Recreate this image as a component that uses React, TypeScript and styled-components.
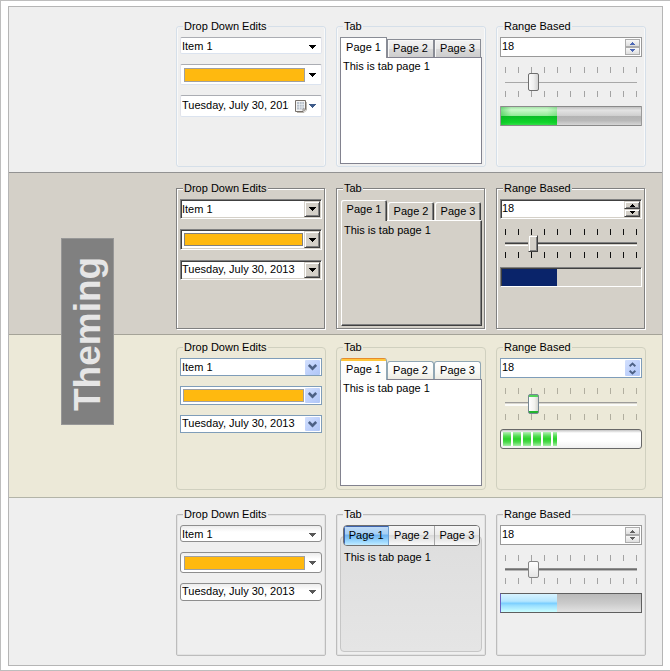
import React, { useId, useState } from 'react';
import styled, { createGlobalStyle, css, ThemeProvider } from 'styled-components';

type Kind = 'aero' | 'classic' | 'luna' | 'silver';

interface Skin {
  kind: Kind;
  face: string;
  divider: string;
  bandPadding: string;
  groupHeight: number;
  group: any;
  comboHeight: number;
  colorHeight: number;
  dateHeight: number;
  field: any;
  numericField: any;
  fieldPad: string;
  spin: any;
  swatch: any;
  strip: any;
  tab: any;
  activeTab: any;
  pane: any;
  tick: string;
  track: any;
  thumbHeight: number;
  thumb: any;
  bar: any;
  trough: any;
  fill: any;
}

const raised = css`
  background: #d4d0c8;
  border: 1px solid;
  border-color: #d4d0c8 #404040 #404040 #d4d0c8;
  box-shadow: inset 1px 1px 0 #fff, inset -1px -1px 0 #808080;
`;

const sunken = css`
  border: 1px solid;
  border-color: #808080 #fff #fff #808080;
  box-shadow: inset 1px 1px 0 #404040, inset -1px -1px 0 #d4d0c8;
`;

const flatSpin = css`
  border: 1px solid #acacac;
  background: linear-gradient(#f8f8f8, #dedede);
`;

const squareNumeric = css`
  border: 1px solid #999;
  border-radius: 0;
  background: #fff;
`;

const aero: Skin = {
  kind: 'aero',
  face: '#efefef',
  divider: '#929292',
  bandPadding: '12px 16px 5px 167px',
  groupHeight: 148,
  group: css`
    border-color: #d5dfe9;
    border-radius: 3px;
    box-shadow: inset 1px 0 0 #f9f9f9, inset -1px 0 0 #f9f9f9;
  `,
  comboHeight: 17,
  colorHeight: 21,
  dateHeight: 22,
  field: css`
    border: 1px solid;
    border-color: #abadb3 #e2e3ea #dbe3ef #e2e3ea;
    border-radius: 2px;
  `,
  numericField: squareNumeric,
  fieldPad: '1px',
  spin: flatSpin,
  swatch: css`
    margin: 2px 0 1px 2px;
  `,
  strip: css``,
  tab: css`
    border: 1px solid #898c95;
    border-bottom: 0;
    background: linear-gradient(#f3f3f3, #e9e9e9 50%, #dadada 52%, #cdcdcd);
    box-shadow: inset 1px 1px 0 #f8f8f8;
  `,
  activeTab: css`
    background: #fff;
    box-shadow: none;
  `,
  pane: css`
    min-height: 107px;
    border: 1px solid #82828f;
    background: #fff;
    padding: 1px 2px;
  `,
  tick: '#a3a3a3',
  track: css`
    background-image: linear-gradient(#a8a8a8, #a8a8a8);
    background-size: calc(100% - 10px) 1px;
  `,
  thumbHeight: 18,
  thumb: css`
    border: 1px solid #6e6e6e;
    border-radius: 2px;
    background: linear-gradient(90deg, #fbfbfb, #f0f0f0 50%, #d2d2d2);
  `,
  bar: css`
    border: 1px solid;
    border-color: #8a8a8a #9a9a9a #8a8a8a;
    border-radius: 1px;
  `,
  trough: css`
    background: linear-gradient(#c0c0c0, #e3e3e3 18%, #cfcfcf 48%, #b3b3b3 52%, #b8b8b8 75%, #d6d6d6);
  `,
  fill: css`
    background: linear-gradient(90deg, #04b81e66 0, transparent 10px, transparent calc(100% - 10px), #04b81e33),
      linear-gradient(#a6e0a8, #cbfacb 16%, #93ea98 48%, #0bbd26 52%, #10d52a 85%, #35dd49);
  `,
};

const classic: Skin = {
  kind: 'classic',
  face: '#d4d0c8',
  divider: '#a5a398',
  bandPadding: '8px 16px 4px 167px',
  groupHeight: 148,
  group: css`
    border-color: #808080;
    box-shadow: 1px 1px 0 #fff, inset 1px 1px 0 #fff;
    margin: 0 1px 1px 0;
    padding-right: 2px;
  `,
  comboHeight: 20,
  colorHeight: 21,
  dateHeight: 20,
  field: sunken,
  numericField: css``,
  fieldPad: '1px',
  spin: raised,
  swatch: css`
    margin: 2px 1px 2px 2px;
    border-color: #808080;
  `,
  strip: css`
    height: 21px;
    padding: 1px 0 0 1px;
    gap: 1px;
  `,
  tab: css`
    flex-basis: 46px;
    border: 0;
    background: #d4d0c8;
    border-radius: 2px 2px 0 0;
    box-shadow: inset 1px 1px 0 #fff, inset -1px 0 0 #404040, inset -2px 0 0 #808080;
  `,
  activeTab: css`
    height: 21px;
  `,
  pane: css`
    min-height: 106px;
    margin-left: 1px;
    border: 1px solid;
    border-color: #fff #404040 #404040 #fff;
    box-shadow: inset -1px -1px 0 #808080;
    padding: 2px;
  `,
  tick: '#101010',
  track: css`
    background-image: linear-gradient(#808080 0 1px, #404040 1px 2px, #d4d0c8 2px 3px, #fff 3px 4px);
    background-size: calc(100% - 10px) 4px;
  `,
  thumbHeight: 17,
  thumb: raised,
  bar: css`
    border: 1px solid;
    border-color: #808080 #fff #fff #808080;
    padding: 0;
  `,
  trough: css`
    background: #d4d0c8;
    box-shadow: inset 0 1px 0 #404040;
  `,
  fill: css`
    background: #0a246a;
    border-top: 1px solid #404040;
    border-left: 1px solid #404040;
  `,
};

const luna: Skin = {
  kind: 'luna',
  face: '#ece9d8',
  divider: '#b3b4a8',
  bandPadding: '5px 16px 7px 167px',
  groupHeight: 150,
  group: css`
    border-color: #d0d0bf;
    border-radius: 4px;
  `,
  comboHeight: 18,
  colorHeight: 19,
  dateHeight: 18,
  field: css`
    border: 1px solid #7f9db9;
  `,
  numericField: css``,
  fieldPad: '1px',
  spin: css`
    border: 0;
    border-radius: 1px;
    background: linear-gradient(135deg, #d3e0fd, #bccffb 60%, #b0c6f6);
  `,
  swatch: css`
    margin: 1px;
  `,
  strip: css`
    height: 21px;
  `,
  tab: css`
    border: 1px solid #91a7b4;
    border-bottom: 0;
    border-radius: 3px 3px 0 0;
    background: linear-gradient(#fff, #f8f8f4 60%, #ecebe2);
  `,
  activeTab: css`
    border-top: 0;
    background: linear-gradient(#e68b2c 0 1px, #ffc73c 1px 3px, #fff 3px, #fcfcfa);
    padding-bottom: 0;
  `,
  pane: css`
    min-height: 107px;
    border: 1px solid #82828f;
    background: #fff;
    padding: 1px 2px;
  `,
  tick: '#b1ae9f',
  track: css`
    background-image: linear-gradient(#9d9c99 0 1px, #d9d7ce 1px 2px, #fbfbf8 2px 4px);
    background-size: calc(100% - 10px) 4px;
  `,
  thumbHeight: 20,
  thumb: css`
    border: 1px solid #778892;
    border-radius: 2px;
    background: linear-gradient(#52d35b 0 2px, transparent 2px calc(100% - 2px), #22b52f calc(100% - 2px)),
      linear-gradient(90deg, #fff, #f3f3ef 60%, #d5d6d0);
  `,
  bar: css`
    border: 1px solid #686868;
    border-radius: 3px;
    padding: 2px;
    background: linear-gradient(#c4c4c4, #fff 3px, #fff 60%, #f1f1f1);
  `,
  trough: css`
    background: transparent;
  `,
  fill: css`
    background: repeating-linear-gradient(90deg, transparent 0 8px, #fff 8px 10px),
      linear-gradient(#b5efb5, #50dc50 30%, #2bd22b 50%, #4bd94b 72%, #a8eca8);
  `,
};

const silver: Skin = {
  kind: 'silver',
  face: '#efefef',
  divider: 'transparent',
  bandPadding: '9px 16px 8px 167px',
  groupHeight: 149,
  group: css`
    border-color: #bcbcbc;
    border-radius: 2px;
    box-shadow: inset 0 0 0 1px #e3e3e3;
  `,
  comboHeight: 17,
  colorHeight: 21,
  dateHeight: 18,
  field: css`
    border: 1px solid #8e8e8e;
    border-radius: 3px;
    background: linear-gradient(#ececec, #fff 6px);
  `,
  numericField: squareNumeric,
  fieldPad: '1px',
  spin: flatSpin,
  swatch: css`
    margin: 2px 0 1px 2px;
  `,
  strip: css`
    height: 21px;
    margin: 0 2px -10px 3px;
    border: 1px solid #6f6f6f;
    border-radius: 4px;
    overflow: hidden;
    background: #efefef;
  `,
  tab: css`
    flex: 1;
    height: 100%;
    border: 0;
    border-right: 1px solid #a8a8a8;
    background: linear-gradient(#f6f6f6, #ebebeb 45%, #dadada 50%, #fafafa);
    &:last-child {
      border-right: 0;
    }
  `,
  activeTab: css`
    margin: 0;
    border-right-color: #6d9fd2;
    background: linear-gradient(#c3dcf6, #a5cff6 42%, #6db2f0 48%, #a2dcff 85%, #c4ebff);
    box-shadow: inset 1px 1px 0 #3d63ad;
  `,
  pane: css`
    min-height: 116px;
    border: 1px solid #c6c6c6;
    border-radius: 4px;
    background: linear-gradient(#dedede, #e5e5e5);
    padding: 13px 3px 2px;
  `,
  tick: '#a3a3a3',
  track: css`
    background-image: linear-gradient(#8d8d8d 0 1px, #6d6d6d 1px 2px, #b5b5b5 2px 3px);
    background-size: calc(100% - 10px) 3px;
  `,
  thumbHeight: 17,
  thumb: css`
    border: 1px solid #858585;
    border-radius: 2px;
    background: linear-gradient(#fefefe, #e6e6e6);
  `,
  bar: css`
    border: 1px solid #5f5f5f;
    border-left-color: #6a5fc0;
  `,
  trough: css`
    background: linear-gradient(#bababa, #cacaca 50%, #e2e2e2);
  `,
  fill: css`
    background: linear-gradient(#d7f3ff, #b5e6ff 40%, #7ccfff 52%, #9be0ff 65%, #ccffff);
  `,
};

declare module 'styled-components' {
  export interface DefaultTheme extends Skin {}
}

const GlobalStyle = createGlobalStyle`
  *, *::before, *::after { box-sizing: border-box; }
  body { margin: 0; background: #fff; }
  body, button, input, select {
    font-family: "Liberation Sans", Arial, sans-serif;
    font-size: 11px;
    line-height: 15px;
    color: #000;
  }
`;

const Page = styled.main`
  border: solid #bdbdbd;
  border-width: 1px 0 1px 1px;
  padding: 5px 7px 4px;
`;

const Frame = styled.div`
  position: relative;
  border: 1px solid #b5b5b5;
`;

const Badge = styled.h1`
  position: absolute;
  top: 231px;
  left: 52px;
  margin: 0;
  width: 53px;
  height: 187px;
  display: flex;
  align-items: center;
  justify-content: flex-start;
  padding-top: 13px;
  border: 1px solid #979797;
  background: #808080;
  color: #e6e6e6;
  font-size: 37px;
  font-weight: bold;
  line-height: 51px;
  writing-mode: vertical-rl;
  transform: rotate(180deg);
`;

const Band = styled.section`
  display: grid;
  grid-template-columns: repeat(3, minmax(0, 1fr));
  gap: 10px;
  padding: ${({ theme }) => theme.bandPadding};
  background: ${({ theme }) => theme.face};
  border-bottom: 1px solid ${({ theme }) => theme.divider};
`;

const GroupBox = styled.fieldset`
  min-width: 0;
  min-height: ${({ theme }) => theme.groupHeight}px;
  margin: 0;
  border: 1px solid;
  padding: 3px 3px 0;
  ${({ theme }) => theme.group}
`;

const Legend = styled.legend`
  margin-left: 3px;
  padding: 0 1px;
  background: ${({ theme }) => theme.face};
  white-space: nowrap;
`;

const Stack = styled.div`
  display: flex;
  flex-direction: column;
  gap: 10px;
`;

const RangeStack = styled(Stack)`
  gap: 9px;
`;

const Field = styled.div<{ $height: number }>`
  display: flex;
  align-items: stretch;
  height: ${({ $height }) => $height}px;
  background: #fff;
  padding: ${({ theme }) => theme.fieldPad};
  ${({ theme }) => theme.field}
`;

const NumericField = styled(Field)`
  ${({ theme }) => theme.numericField}
`;

const SelectField = styled(Field)`
  display: grid;
  grid-template-columns: minmax(0, 1fr) auto;
`;

const Select = styled.select`
  grid-area: 1 / 1 / 2 / 3;
  min-width: 0;
  appearance: none;
  border: 0;
  margin: 0;
  padding: 0;
  background: transparent;
  outline: 0;
`;

const TextInput = styled.input`
  flex: 1;
  min-width: 0;
  width: 0;
  border: 0;
  padding: 0 0 2px;
  background: transparent;
  outline: 0;
`;

const arrowBox = css`
  display: flex;
  flex: none;
  align-items: center;
  justify-content: center;
  width: ${({ theme }) => (theme.kind === 'classic' ? 16 : 15)}px;
  padding: 0;
  margin: 0;
  border: 0;
  background: transparent;
  ${({ theme }) => (theme.kind === 'classic' || theme.kind === 'luna' ? theme.spin : '')}
`;

const ArrowFace = styled.span`
  ${arrowBox}
  grid-area: 1 / 2;
  pointer-events: none;
`;

const ArrowButton = styled.button<{ $wide: boolean }>`
  ${arrowBox}
  ${({ $wide }) =>
    $wide &&
    css`
      justify-content: flex-end;
      gap: 2px;
      width: 31px;
      padding-right: 4px;
    `}
`;

const ColorButton = styled.button`
  display: flex;
  flex: 1;
  min-width: 0;
  align-items: stretch;
  border: 0;
  padding: 0;
  background: transparent;
`;

const Swatch = styled.span`
  flex: 1;
  border: 1px solid #a0a0a0;
  background: #ffb90f;
  ${({ theme }) => theme.swatch}
`;

const Spinner = styled.div`
  display: flex;
  flex: none;
  flex-direction: column;
  width: ${({ theme }) => (theme.kind === 'classic' ? 16 : 15)}px;
  ${({ theme }) => (theme.kind === 'luna' ? theme.spin : '')}
`;

const SpinButton = styled.button`
  display: flex;
  flex: 1;
  min-height: 0;
  align-items: center;
  justify-content: center;
  border: 0;
  padding: 0;
  background: transparent;
  ${({ theme }) => (theme.kind === 'luna' ? '' : theme.spin)}
`;

const Strip = styled.div`
  position: relative;
  display: flex;
  align-items: flex-end;
  height: 20px;
  ${({ theme }) => theme.strip}
`;

const Tab = styled.button<{ $active: boolean }>`
  flex: 0 0 47px;
  height: 18px;
  padding: 0;
  text-align: center;
  white-space: nowrap;
  ${({ theme }) => theme.tab}
  ${({ $active, theme }) =>
    $active &&
    css`
      z-index: 1;
      ${theme.kind === 'silver' ? '' : 'height: calc(100% + 1px); margin-bottom: -1px; padding-bottom: 2px;'}
      ${theme.activeTab}
    `}
`;

const Pane = styled.div`
  ${({ theme }) => theme.pane}
`;

const Slider = styled.div`
  display: flex;
  flex-direction: column;
  padding-top: 1px;
`;

const Ticks = styled.div`
  display: flex;
  justify-content: space-between;
  height: 6px;
  padding: 0 5px;
`;

const Tick = styled.span`
  width: 1px;
  background: ${({ theme }) => theme.tick};
`;

const Range = styled.input`
  appearance: none;
  display: block;
  width: 100%;
  height: ${({ theme }) => theme.thumbHeight}px;
  margin: 0;
  background: transparent;
  outline: 0;
  &::-webkit-slider-runnable-track {
    height: ${({ theme }) => theme.thumbHeight}px;
    background-repeat: no-repeat;
    background-position: center;
    ${({ theme }) => theme.track}
  }
  &::-webkit-slider-thumb {
    appearance: none;
    width: ${({ theme }) => (theme.kind === 'classic' ? 10 : 11)}px;
    height: ${({ theme }) => theme.thumbHeight}px;
    ${({ theme }) => theme.thumb}
  }
`;

const Progress = styled.progress`
  appearance: none;
  display: block;
  width: 100%;
  height: 20px;
  ${({ theme }) => theme.bar}
  &::-webkit-progress-bar {
    ${({ theme }) => theme.trough}
  }
  &::-webkit-progress-value {
    ${({ theme }) => theme.fill}
  }
`;

const ARROW_COLOR: Record<Kind, string> = {
  aero: '#000',
  classic: '#000',
  luna: '#4d6185',
  silver: '#585858',
};

function DownArrow({ kind, color }: { kind: Kind; color?: string }) {
  const fill = color ?? ARROW_COLOR[kind];
  if (kind === 'luna') {
    return (
      <svg width="9" height="7" viewBox="0 0 9 7" aria-hidden="true">
        <path d="M0.8 1 4.5 4.700 8.200 1" fill="none" stroke={fill} strokeWidth="2.600" />
      </svg>
    );
  }
  return (
    <svg width="7" height="4" viewBox="0 0 7 4" shapeRendering="crispEdges" aria-hidden="true">
      <path d="M0 0H7V1H6V2H5V3H4V4H3V3H2V2H1V1H0Z" fill={fill} />
    </svg>
  );
}

function SpinArrow({ kind, up }: { kind: Kind; up?: boolean }) {
  const flip = up ? 'rotate(180 3.5 2)' : undefined;
  if (kind === 'luna') {
    return (
      <svg width="7" height="5" viewBox="0 0 7 5" aria-hidden="true">
        <path
          d="M0.600 0.800 3.500 3.400 6.400 0.800"
          fill="none"
          stroke="#4d6185"
          strokeWidth="2"
          transform={up ? 'rotate(180 3.5 2.5)' : undefined}
        />
      </svg>
    );
  }
  const fill = kind === 'aero' ? '#4d68b5' : kind === 'classic' ? '#000' : '#606060';
  return (
    <svg width="7" height="4" viewBox="0 0 7 4" shapeRendering="crispEdges" aria-hidden="true">
      <path d="M1 0H6V1H5V2H4V3H3V2H2V1H1Z" fill={fill} transform={flip} />
    </svg>
  );
}

function CalendarIcon() {
  return (
    <svg width="12" height="13" viewBox="0 0 12 13" aria-hidden="true">
      <path d="M2 12.5H9L11.5 10V2" fill="none" stroke="#b9b5ae" />
      <path d="M0.5 0.5H10.5V9L8 11.5H0.5Z" fill="#f4f4f4" stroke="#77716b" />
      <path d="M2 2H9V9.500H2Z" fill="#b8c0cb" />
      <path d="M2 4.500H9M2 7H9M4.500 2V9.500M7 2V9.500" stroke="#f4f6f8" strokeWidth="0.600" />
      <path d="M8 11.500V9H10.500Z" fill="#fff" stroke="#77716b" strokeWidth="0.700" />
    </svg>
  );
}

function DropDownEdits({ skin }: { skin: Skin }) {
  const isAero = skin.kind === 'aero';
  return (
    <GroupBox>
      <Legend>Drop Down Edits</Legend>
      <Stack>
        <SelectField $height={skin.comboHeight}>
          <Select aria-label="Item" defaultValue="Item 1">
            <option>Item 1</option>
            <option>Item 2</option>
            <option>Item 3</option>
          </Select>
          <ArrowFace>
            <DownArrow kind={skin.kind} />
          </ArrowFace>
        </SelectField>
        <Field $height={skin.colorHeight}>
          <ColorButton type="button" aria-label="Color" aria-haspopup="listbox">
            <Swatch />
            <ArrowFace>
              <DownArrow kind={skin.kind} />
            </ArrowFace>
          </ColorButton>
        </Field>
        <Field $height={skin.dateHeight}>
          <TextInput aria-label="Date" defaultValue="Tuesday, July 30, 2013" />
          <ArrowButton type="button" $wide={isAero} aria-label="Open calendar">
            {isAero && <CalendarIcon />}
            <DownArrow kind={skin.kind} color={isAero ? '#3f5c8a' : undefined} />
          </ArrowButton>
        </Field>
      </Stack>
    </GroupBox>
  );
}

function Tabs() {
  const [page, setPage] = useState(1);
  const id = useId();
  return (
    <GroupBox>
      <Legend>Tab</Legend>
      <Strip role="tablist">
        {[1, 2, 3].map((n) => (
          <Tab
            key={n}
            type="button"
            role="tab"
            id={`${id}-tab-${n}`}
            aria-selected={page === n}
            aria-controls={`${id}-pane`}
            $active={page === n}
            onClick={() => setPage(n)}
          >
            Page {n}
          </Tab>
        ))}
      </Strip>
      <Pane role="tabpanel" id={`${id}-pane`} aria-labelledby={`${id}-tab-${page}`}>
        This is tab page {page}
      </Pane>
    </GroupBox>
  );
}

function TickRow() {
  return (
    <Ticks aria-hidden="true">
      {Array.from({ length: 11 }, (_, i) => (
        <Tick key={i} />
      ))}
    </Ticks>
  );
}

function RangeBased({ skin }: { skin: Skin }) {
  const [value, setValue] = useState('18');
  const step = (delta: number) => setValue((v) => String((Number(v) || 0) + delta));
  return (
    <GroupBox>
      <Legend>Range Based</Legend>
      <RangeStack>
        <NumericField $height={20}>
          <TextInput
            aria-label="Value"
            inputMode="numeric"
            value={value}
            onChange={(e) => setValue(e.target.value)}
          />
          <Spinner>
            <SpinButton type="button" aria-label="Increase" onClick={() => step(1)}>
              <SpinArrow kind={skin.kind} up />
            </SpinButton>
            <SpinButton type="button" aria-label="Decrease" onClick={() => step(-1)}>
              <SpinArrow kind={skin.kind} />
            </SpinButton>
          </Spinner>
        </NumericField>
        <Slider>
          <TickRow />
          <Range type="range" aria-label="Position" min={0} max={100} defaultValue={21} />
          <TickRow />
        </Slider>
        <Progress aria-label="Progress" max={100} value={40} />
      </RangeStack>
    </GroupBox>
  );
}

const SKINS: Skin[] = [aero, classic, luna, silver];

export default function App() {
  return (
    <>
      <GlobalStyle />
      <Page>
        <Frame>
          {SKINS.map((skin) => (
            <ThemeProvider key={skin.kind} theme={skin}>
              <Band>
                <DropDownEdits skin={skin} />
                <Tabs />
                <RangeBased skin={skin} />
              </Band>
            </ThemeProvider>
          ))}
          <Badge>Theming</Badge>
        </Frame>
      </Page>
    </>
  );
}
